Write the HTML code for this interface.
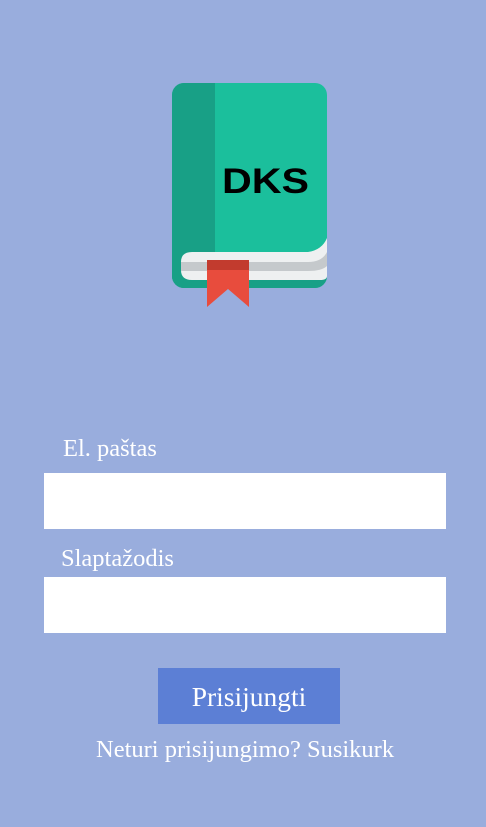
<!DOCTYPE html>
<html><head><meta charset="utf-8"><style>
html,body{margin:0;padding:0}
body{width:486px;height:827px;background:#99addd;position:relative;overflow:hidden;font-family:"Liberation Serif",serif;color:#fff}
.t{position:absolute;white-space:nowrap;line-height:1}
.in{position:absolute;left:44px;width:402px;height:56px;background:#fff}
.btn{position:absolute;left:158px;top:668px;width:182px;height:56px;background:#5c7fd5}
</style></head><body>
<svg style="position:absolute;left:0;top:0" width="486" height="330">
<rect x="172" y="83" width="155" height="205" rx="12" fill="#1bbf9c"/>
<path d="M184 83 H215 V288 H184 A12 12 0 0 1 172 276 V95 A12 12 0 0 1 184 83Z" fill="#18a086"/>
<path d="M172 270 V276 A12 12 0 0 0 184 288 H315 A12 12 0 0 0 327 276 V270Z" fill="#18a086"/>
<path d="M181 262 Q181 252 192 252 H308 Q322 250 327 238 V276 Q327 280 320 280 H192 Q181 280 181 270Z" fill="#eef0f1"/>
<path d="M181 262 H308 Q322 262 327 252 V266 Q322 271 308 271 H181Z" fill="#c5c9cc"/>
<rect x="207" y="260" width="42" height="10" fill="#c23b2e"/>
<path d="M207 270 H249 V307 L228 289 L207 307Z" fill="#e84c3d"/>
<text x="222" y="193" font-family="Liberation Sans, sans-serif" font-weight="bold" font-size="35" textLength="87" lengthAdjust="spacingAndGlyphs" fill="#000">DKS</text>
</svg>
<div class="t" style="left:63px;top:437px;font-size:24.5px">El. paštas</div>
<div class="in" style="top:473px"></div>
<div class="t" style="left:61px;top:547px;font-size:24.5px">Slaptažodis</div>
<div class="in" style="top:577px"></div>
<div class="btn"></div>
<div class="t" style="left:158px;width:182px;text-align:center;top:683px;font-size:27.5px">Prisijungti</div>
<div class="t" style="left:96px;top:738px;font-size:24.5px">Neturi prisijungimo? Susikurk</div>
</body></html>
